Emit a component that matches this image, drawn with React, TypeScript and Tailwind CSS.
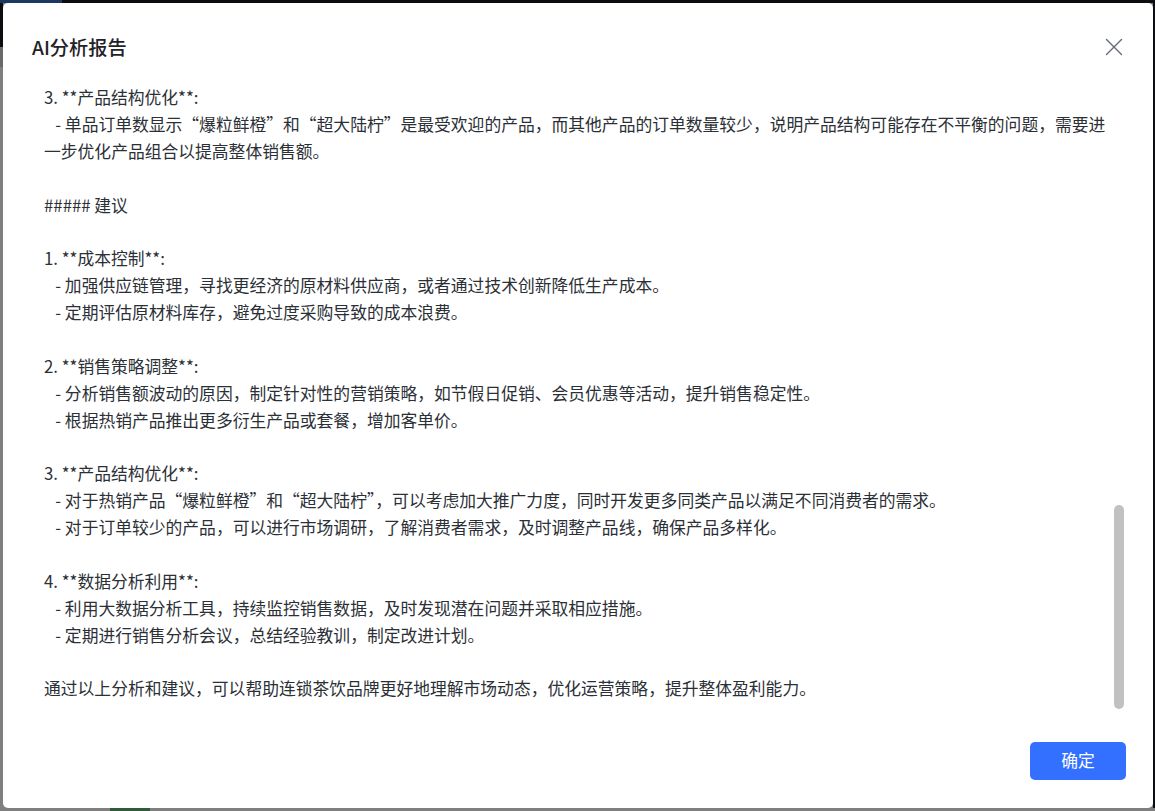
const report = [
  '3. **产品结构优化**:',
  '   - 单品订单数显示“爆粒鲜橙”和“超大陆柠”是最受欢迎的产品，而其他产品的订单数量较少，说明产品结构可能存在不平衡的问题，需要进一步优化产品组合以提高整体销售额。',
  '',
  '##### 建议',
  '',
  '1. **成本控制**:',
  '   - 加强供应链管理，寻找更经济的原材料供应商，或者通过技术创新降低生产成本。',
  '   - 定期评估原材料库存，避免过度采购导致的成本浪费。',
  '',
  '2. **销售策略调整**:',
  '   - 分析销售额波动的原因，制定针对性的营销策略，如节假日促销、会员优惠等活动，提升销售稳定性。',
  '   - 根据热销产品推出更多衍生产品或套餐，增加客单价。',
  '',
  '3. **产品结构优化**:',
  '   - 对于热销产品“爆粒鲜橙”和“超大陆柠”，可以考虑加大推广力度，同时开发更多同类产品以满足不同消费者的需求。',
  '   - 对于订单较少的产品，可以进行市场调研，了解消费者需求，及时调整产品线，确保产品多样化。',
  '',
  '4. **数据分析利用**:',
  '   - 利用大数据分析工具，持续监控销售数据，及时发现潜在问题并采取相应措施。',
  '   - 定期进行销售分析会议，总结经验教训，制定改进计划。',
  '',
  '通过以上分析和建议，可以帮助连锁茶饮品牌更好地理解市场动态，优化运营策略，提升整体盈利能力。',
].join('\n');

function CloseIcon() {
  return (
    <svg width="18" height="18" viewBox="0 0 18 18" fill="none">
      <path d="M1.5 1.5 16.5 16.5M16.5 1.5 1.5 16.5" stroke="#646a73" strokeWidth="1.4" strokeLinecap="round" />
    </svg>
  );
}

export default function App() {
  return (
    <div className="flex h-[811px] w-[1155px] flex-col overflow-hidden bg-[#7f7f7f] font-['Noto_Sans_CJK_SC','Noto_Sans',sans-serif]">
      {/* dimmed page behind the modal */}
      <div className="flex h-[3px] shrink-0">
        <div className="w-[62px] bg-[#1d3763]" />
        <div className="flex-1 bg-[#0c0d10]" />
      </div>

      <div className="flex flex-1">
        <div className="flex w-[3px] shrink-0 flex-col">
          <div className="h-[44px] bg-[#0c0d10]" />
          <div className="h-[20px] bg-[#6a6a6a]" />
          <div className="flex-1 bg-[#7f7f7f]" />
        </div>

        {/* modal */}
        <div className="flex h-[805px] w-[1150px] flex-col rounded-[5px] bg-white px-[29px]">
          <div className="flex items-center justify-between pb-[24px] pt-[31px]">
            <h2 className="text-[19.2px] font-medium leading-[26px] text-[#1f2329]">AI分析报告</h2>
            <button className="mr-[1px] flex h-[18px] w-[18px] items-center justify-center">
              <CloseIcon />
            </button>
          </div>

          <div className="flex h-[630px]">
            <div className="flex-1 overflow-hidden pl-[12px] pr-[4px]">
              <div className="whitespace-pre-wrap text-[16.8px] leading-[26.88px] text-[#2b2f36]">{report}</div>
            </div>
            <div className="w-[10px] shrink-0">
              <div className="mt-[421px] h-[204px] w-[10px] rounded-full bg-[#c1c1c1]" />
            </div>
          </div>

          <div className="flex justify-end pb-[28px] pt-[28px]">
            <button className="-mr-[2px] h-[38px] w-[96px] rounded-[5px] bg-[#3370ff] text-[16.8px] text-white">
              确定
            </button>
          </div>
        </div>

        <div className="flex-1 bg-[#0c0d10]" />
      </div>

      <div className="flex h-[3px] shrink-0">
        <div className="w-[110px]" />
        <div className="w-[40px] bg-[#2f5b3c]" />
      </div>
    </div>
  );
}
